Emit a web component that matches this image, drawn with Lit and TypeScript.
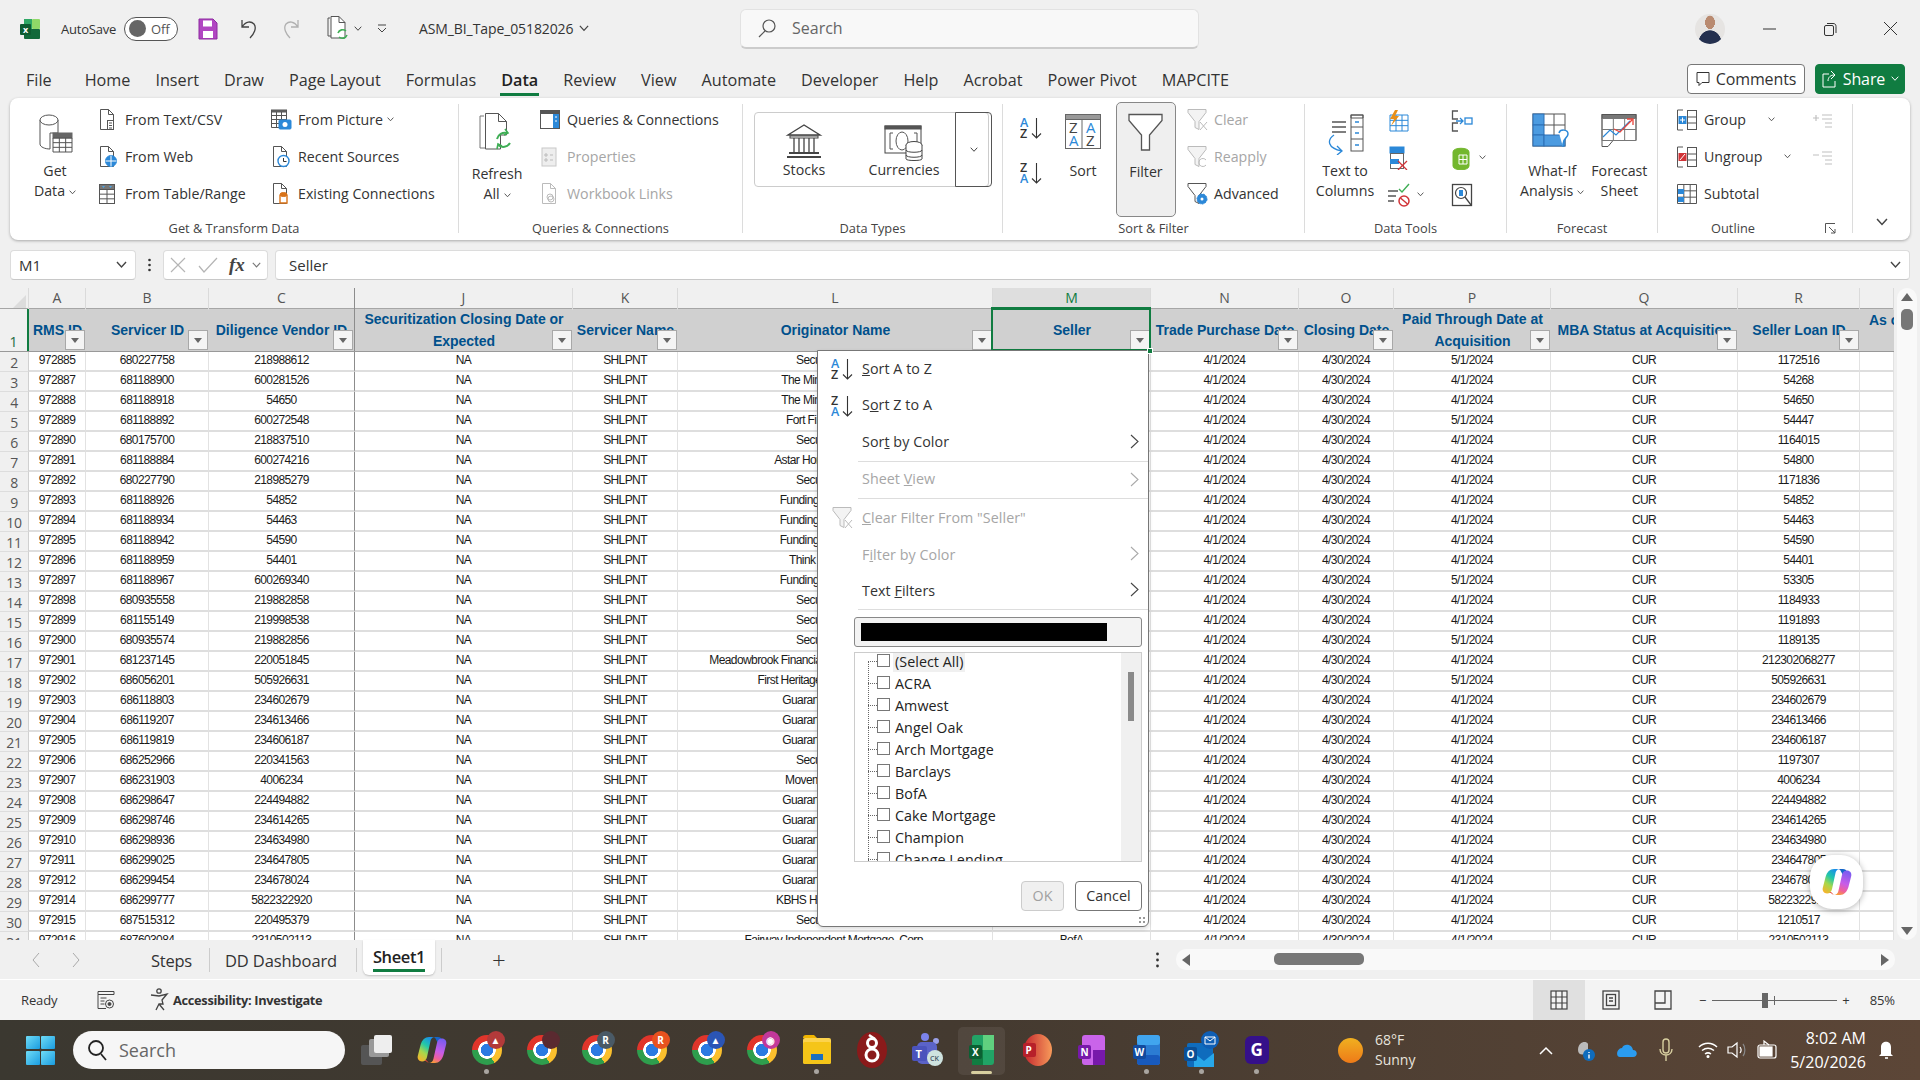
import { LitElement, html, css, svg } from "lit";
import { customElement } from "lit/decorators.js";

const ic = (w: number, h: number, body: any) => html`<svg class="ic" width=${w} height=${h} viewBox="0 0 ${w} ${h}" fill="none" stroke="#555" stroke-width="1">${body}</svg>`;
const docP = svg`<path d="M3.5 .5h8l5 5v15h-13z" fill="#fff"/><path d="M11.5 .5v5h5"/>`;
const gridS = (x: number, y: number, w: number, h: number, nx: number, ny: number, st = "#555") => {
  const o = [];
  for (let i = 0; i <= nx; i++) o.push(svg`<path d="M${x + (i * w) / nx} ${y}v${h}" stroke=${st}/>`);
  for (let i = 0; i <= ny; i++) o.push(svg`<path d="M${x} ${y + (i * h) / ny}h${w}" stroke=${st}/>`);
  return o;
};
const I: Record<string, any> = {
  getData: ic(38, 42, svg`<path d="M4 7v24c0 3 5 5 10 5V20h8V7" fill="#fff"/><ellipse cx="13" cy="7" rx="9" ry="5" fill="#fff"/><rect x="17" y="20" width="19" height="5" fill="#666" stroke="#666"/>${gridS(17, 25, 19, 14, 3, 3)}`),
  csv: ic(20, 22, svg`${docP}<rect x="10.5" y="11.5" width="6" height="9" fill="#fff"/><path d="M12 14h3M12 16.5h3M12 19h3"/>`),
  web: ic(20, 22, svg`${docP}<circle cx="14" cy="15" r="5.5" fill="#2b88d8" stroke="#2b88d8"/><path d="M8.5 15h11M14 9.500v11" stroke="#fff"/>`),
  range: ic(20, 22, svg`<rect x="2.500" y="1.500" width="15" height="19" fill="#fff"/><rect x="2.500" y="1.500" width="15" height="5" fill="#777"/><path d="M5 3l1.500 2L8 3zM12 3l1.500 2L15 3z" fill="#4aa5e8" stroke="none"/>${gridS(2.5, 6.5, 15, 14, 2, 3)}`),
  picture: ic(22, 22, svg`${gridS(1.5, 2.5, 15, 16, 3, 4)}<rect x="1.500" y="1" width="15" height="2" fill="#666"/><rect x="9" y="11" width="12" height="9" rx="1" fill="#2b88d8" stroke="#2b88d8"/><circle cx="15" cy="15.500" r="2.500" fill="#fff" stroke="none"/>`),
  recent: ic(20, 22, svg`${docP}<circle cx="13.500" cy="15" r="5.500" fill="#fff" stroke="#2b88d8" stroke-width="1.400"/><path d="M13.500 12v3.500h3" stroke="#333"/>`),
  existing: ic(20, 22, svg`${docP}<path d="M10 12v8h7v-8" fill="#fff" stroke="#d9741a" stroke-width="1.400"/><ellipse cx="13.500" cy="11.500" rx="3.500" ry="2" fill="#d9741a" stroke="#d9741a"/>`),
  queries: ic(22, 22, svg`<rect x="1.500" y="2.500" width="19" height="17" fill="#fff" stroke="#555"/><rect x="1.500" y="1.500" width="19" height="3" fill="#555"/><rect x="14" y="5" width="6" height="14" fill="#2b88d8" stroke="none"/><path d="M16 8h2M16 12h2" stroke="#fff"/>`),
  props: ic(20, 22, svg`<rect x="3" y="2" width="14" height="18" fill="#eee" stroke="#c8c8c8"/><path d="M6 8h2v2H6zM6 13h2v2H6zM11 9h3M11 14h3" stroke="#bbb"/>`),
  wlinks: ic(20, 22, svg`<g stroke="#bbb"><path d="M3.500 .5h8l5 5v15h-13z"/><path d="M11.500 .5v5h5"/><circle cx="11" cy="14" r="3"/><circle cx="12" cy="16" r="3"/></g>`),
  refresh: ic(40, 42, svg`<path d="M3 3h4M3 3v32h6" stroke="#777"/><path d="M8.500 .5h13l8 8V22h-6v14H8.500z" fill="#fff"/><path d="M21.500 .5v8h8"/><path d="M30 20a8 8 0 0 0-10 6m1 6a8 8 0 0 0 12-2" stroke="#3fae55" stroke-width="2"/><path d="M28 16l3 4-4 2M20 36l1-5 4 2" stroke="#3fae55" stroke-width="1.600"/>`),
  bank: ic(38, 36, svg`<path d="M19 2L3 12h32z" fill="#fff" stroke="#444" stroke-width="1.400"/><rect x="5" y="13" width="28" height="2" stroke="#444"/><path d="M9 15v14M14 15v14M19 15v14M24 15v14M29 15v14" stroke="#444" stroke-width="1.300"/><path d="M4 30h30M2 34h34" stroke="#444" stroke-width="1.800"/>`),
  curr: ic(42, 42, svg`<rect x="2" y="3" width="36" height="27" fill="#fff" stroke="#444"/><rect x="2" y="3" width="36" height="3" fill="#555"/><path d="M10 10H7v16h3M31 10h3v16h-3"/><ellipse cx="19" cy="18" rx="6" ry="9"/><ellipse cx="31" cy="22" rx="8" ry="3.500" fill="#fff" stroke="#444"/><path d="M23 22v14c0 2 16 2 16 0V22" fill="#fff" stroke="#444"/><path d="M23 27c0 3 16 3 16 0M23 32c0 3 16 3 16 0" stroke="#444"/>`),
  az: ic(24, 24, svg`<text x="0" y="10" class="st" fill="#2b88d8" stroke="none">A</text><text x="0" y="21" class="st" fill="#333" stroke="none">Z</text><path d="M16.500 1v20M12 16.500l4.500 4.500 4.500-4.500" stroke="#333" stroke-width="1.100"/>`),
  za: ic(24, 24, svg`<text x="0" y="10" class="st" fill="#333" stroke="none">Z</text><text x="0" y="21" class="st" fill="#2b88d8" stroke="none">A</text><path d="M16.500 1v20M12 16.500l4.500 4.500 4.500-4.500" stroke="#333" stroke-width="1.100"/>`),
  sort: ic(38, 38, svg`<rect x="1.500" y="1.500" width="35" height="34" fill="#fff" stroke="#666"/><rect x="1.500" y="1.500" width="35" height="5" fill="#999" stroke="#666"/><path d="M18 6v30" stroke="#666"/><text x="5" y="20" class="st2" fill="#444" stroke="none">Z</text><text x="5" y="33" class="st2" fill="#2b88d8" stroke="none">A</text><text x="22" y="20" class="st2" fill="#2b88d8" stroke="none">A</text><text x="22" y="33" class="st2" fill="#444" stroke="none">Z</text>`),
  filter: ic(38, 38, svg`<path d="M2 1.500h33v6L22.500 22v15h-8V22L2 7.500z" fill="#fff" stroke="#555" stroke-width="1.300"/>`),
  clear: ic(24, 24, svg`<path d="M2 1.500h18v3l-7 9v8l-4-2v-6l-7-9z" fill="#f3f3f3" stroke="#bbb"/><path d="M14 14l7 8M21 14l-7 8" stroke="#bbb"/>`),
  reapply: ic(24, 24, svg`<path d="M2 1.500h18v3l-7 9v8l-4-2v-6l-7-9z" fill="#f3f3f3" stroke="#bbb"/><path d="M20 15a4 4 0 1 0 0 5" stroke="#bbb"/>`),
  advanced: ic(24, 24, svg`<path d="M2 1.500h18v3l-7 9v8l-4-2v-6l-7-9z" fill="#fff" stroke="#555"/><circle cx="16" cy="17" r="5" fill="#2b88d8" stroke="#2b88d8" stroke-dasharray="2 1"/><circle cx="16" cy="17" r="1.500" fill="#fff" stroke="none"/>`),
  t2c: ic(42, 42, svg`<path d="M8 9h14M8 14h14M8 19h14" stroke="#555" stroke-width="1.500"/><rect x="27" y="2" width="12" height="36" fill="#fff" stroke="#555"/><path d="M27 2h12v3H27zM27 14h12M27 26h12"/><path d="M31 9h4M31 20h4M31 32h4" stroke="#2b88d8" stroke-width="1.500"/><path d="M10 22c-7 5-7 13 8 16M13 33l5 5-5 4" stroke="#2b88d8" stroke-width="1.300"/>`),
  flash: ic(22, 22, svg`${gridS(3, 5, 18, 16, 3, 3, "#2b88d8")}<path d="M8 0L3 9h4l-3 7 8-10H8l3-6z" fill="#e8901a" stroke="none"/>`),
  dup: ic(22, 24, svg`<rect x="3" y="1" width="14" height="6" fill="#2b88d8" stroke="#2b88d8"/><rect x="3.500" y="7.500" width="13" height="15" fill="#fff" stroke="#666"/><rect x="3" y="13" width="9" height="5" fill="#2b88d8" stroke="none"/><path d="M11 15l9 9M20 15l-9 9" stroke="#d13438" stroke-width="1.300"/>`),
  validate: ic(24, 24, svg`<path d="M1 8h10M1 13h8M1 18h6" stroke="#555" stroke-width="1.300"/><path d="M12 6l3 3 7-8" stroke="#3fae55" stroke-width="1.400"/><circle cx="17" cy="18" r="5" stroke="#d13438" stroke-width="1.500"/><path d="M13.500 15l7 6" stroke="#d13438" stroke-width="1.500"/>`),
  consol: ic(22, 22, svg`<path d="M7 1H1.500v8H7M7 13H1.500v8H7" stroke="#555" stroke-width="1.300"/><path d="M5 11h7M9 8l3 3-3 3" stroke="#2b88d8" stroke-width="1.300"/><rect x="14" y="8" width="7" height="6" stroke="#2b88d8" stroke-width="1.300"/>`),
  model: ic(22, 24, svg`<path d="M2 6c0-5 16-5 16 0v14c0 5-16 5-16 0z" fill="#73b72e" stroke="#73b72e"/><path d="M8 9h8v9H8zM12 9v9M8 13.500h8" stroke="#fff"/>`),
  dataan: ic(22, 24, svg`<rect x="1.500" y="1.500" width="19" height="21" stroke="#444" stroke-width="1.300"/><circle cx="10" cy="10" r="5.500" stroke="#444" stroke-width="1.200"/><path d="M14 14l6 8" stroke="#444" stroke-width="1.300"/><rect x="8" y="7" width="4" height="6" fill="#2b88d8" stroke="none"/>`),
  whatif: ic(40, 42, svg`<rect x="1" y="1" width="32" height="32" fill="#fff" stroke="#555"/><rect x="1" y="1" width="11" height="11" fill="#4c9be0" stroke="#2b6fb5"/><rect x="1" y="12" width="11" height="10" fill="#4c9be0" stroke="#2b6fb5"/><rect x="1" y="22" width="11" height="11" fill="#4c9be0" stroke="#2b6fb5"/><rect x="12" y="22" width="21" height="11" fill="#4c9be0" stroke="#2b6fb5"/><path d="M22 1v21M12 12h21M22 22" stroke="#555"/><path d="M27 20c1-4 9-4 9 1 0 4-5 4-5 10v3" fill="#fff" stroke="#2b88d8" stroke-width="1.500"/>`),
  forecast: ic(38, 36, svg`<path d="M2 1.500h34v26H13l-5 6H2z" fill="#fff"/><rect x="2" y="1.500" width="34" height="4" fill="#777"/>${gridS(2, 5.5, 34, 22, 3, 2, "#777")}<path d="M3 24l7-7 6 5 14-14" stroke="#2b88d8" stroke-width="1.200"/><path d="M14 16l6 3 12-12M27 6h6v6" stroke="#e8453c" stroke-width="1.300"/>`),
  group: ic(22, 22, svg`<path d="M7 1H1.500v20H7" stroke="#555"/><rect x="11.500" y="1.500" width="9" height="19" stroke="#555"/><path d="M11.500 8h9M11.500 14h9" stroke="#555"/><rect x="2.500" y="7" width="8" height="8" fill="#2b88d8" stroke="none"/><path d="M4 11h5M6.500 8.500v5" stroke="#fff"/>`),
  ungroup: ic(22, 22, svg`<path d="M7 1H1.500v20H7" stroke="#555"/><rect x="11.500" y="1.500" width="9" height="19" stroke="#555"/><path d="M11.500 8h9M11.500 14h9" stroke="#555"/><rect x="2.500" y="7" width="8" height="8" fill="#d13438" stroke="none"/><path d="M4 14l5-6" stroke="#fff"/>`),
  subtotal: ic(22, 22, svg`${gridS(1.5, 1.5, 19, 19, 3, 3)}<rect x="2" y="6" width="6" height="5" fill="#2b88d8" stroke="none"/><rect x="2" y="14" width="6" height="5" fill="#2b88d8" stroke="none"/>`),
  show: ic(22, 16, svg`<g stroke="#c0c0c0"><path d="M1 5h6M4 2v6M10 2h10M10 6h10M13 10h7M13 14h7" stroke-width="1.200"/></g>`),
  hide: ic(22, 16, svg`<g stroke="#c0c0c0"><path d="M1 5h6M10 2h10M10 6h10M13 10h7M13 14h7" stroke-width="1.200"/></g>`),
};
const chev = (w = 8, st = "#444") => html`<svg class="chev" width=${w} height=${w * 0.7} viewBox="0 0 8 5.600" fill="none" stroke=${st} stroke-width="1"><path d="M.7 .7L4 4.300 7.300 .7"/></svg>`;

const RAW = `972885|680227758|218988612|SecurityNational|5|1172516
972887|681188900|600281526|The Mint Mortgage Co|4|54268
972888|681188918|54650|The Mint Mortgage Co|4|54650
972889|681188892|600272548|Fort Financial Inc Co|5|54447
972890|680175700|218837510|SecurityNational|4|1164015
972891|681188884|600274216|Astar Home Lending LLC|4|54800
972892|680227790|218985279|SecurityNational|4|1171836
972893|681188926|54852|Funding Mortgage LLC|4|54852
972894|681188934|54463|Funding Mortgage LLC|4|54463
972895|681188942|54590|Funding Mortgage LLC|4|54590
972896|681188959|54401|Think Mortgage Inc|4|54401
972897|681188967|600269340|Funding Mortgage LLC|5|53305
972898|680935558|219882858|SecurityNational|4|1184933
972899|681155149|219998538|SecurityNational|4|1191893
972900|680935574|219882856|SecurityNational|5|1189135
972901|681237145|220051845|Meadowbrook Financial Mortgage Bankers Corp, Inc|4|212302068277
972902|686056201|505926631|First Heritage Mortgage, LLC Inc|5|505926631
972903|686118803|234602679|Guaranteed Rate, Inc.|4|234602679
972904|686119207|234613466|Guaranteed Rate, Inc.|4|234613466
972905|686119819|234606187|Guaranteed Rate, Inc.|4|234606187
972906|686252966|220341563|SecurityNational|4|1197307
972907|686231903|4006234|Movement Mortgage|4|4006234
972908|686298647|224494882|Guaranteed Rate, Inc.|4|224494882
972909|686298746|234614265|Guaranteed Rate, Inc.|4|234614265
972910|686298936|234634980|Guaranteed Rate, Inc.|4|234634980
972911|686299025|234647805|Guaranteed Rate, Inc.|4|234647805
972912|686299454|234678024|Guaranteed Rate, Inc.|4|234678024
972914|686299777|5822322920|KBHS Home Loans LLC|4|5822322920
972915|687515312|220495379|SecurityNational|4|1210517
972916|687603084|2310502113|Fairway Independent Mortgage, Corp.|4|2310502113`;
const ROWS = RAW.split("\n").map((l) => l.split("|"));
const COLS = ["A", "B", "C", "J", "K", "L", "M", "N", "O", "P", "Q", "R", ""];
const HEADS = ["RMS ID", "Servicer ID", "Diligence Vendor ID", "Securitization Closing Date or Expected", "Servicer Name", "Originator Name", "Seller", "Trade Purchase Date", "Closing Date", "Paid Through Date at Acquisition", "MBA Status at Acquisition", "Seller Loan ID"];
const TABS = ["File", "Home", "Insert", "Draw", "Page Layout", "Formulas", "Data", "Review", "View", "Automate", "Developer", "Help", "Acrobat", "Power Pivot", "MAPCITE"];
const SELLERS = ["ACRA", "Amwest", "Angel Oak", "Arch Mortgage", "Barclays", "BofA", "Cake Mortgage", "Champion", "Change Lending"];
const BADGES = [
  { c: "#b23a3a", t: "▲" },
  { c: "#5a2a30", t: "" },
  { c: "#4a5a66", t: "R" },
  { c: "#e8521f", t: "R" },
  { c: "#2b55b5", t: "▲" },
  { c: "#c2389a", t: "◉" },
];

@customElement("app-root")
export class AppRoot extends LitElement {
  static styles = css`
    :host { display: block; position: relative; width: 1920px; height: 1080px; overflow: hidden; background: #f0f0f0; font-family: "Open Sans", "Noto Sans", sans-serif; color: #333; font-size: 14px; }
    svg { display: block; flex: none; }
    .st { font: 600 12.500px "Open Sans", sans-serif; }
    .st2 { font: 400 15px "Open Sans", sans-serif; }
    .title { height: 57px; display: flex; align-items: center; padding-left: 20px; box-sizing: border-box; }
    .autosave { margin-left: 21px; width: 54px; font-size: 13px; letter-spacing: -.2px; }
    .toggle { margin-left: 9px; width: 54px; height: 24px; border: 1px solid #555; border-radius: 13px; box-sizing: border-box; display: flex; align-items: center; padding-left: 4px; background: #fff; font-size: 13px; gap: 5px; color: #555; }
    .toggle i { width: 17px; height: 17px; border-radius: 50%; background: #666; flex: none; }
    .qa { display: flex; align-items: center; margin-left: 20px; width: 221px; flex: none; }
    .fname { font-size: 14px; letter-spacing: -.1px; display: flex; align-items: center; gap: 6px; width: 321px; }
    .search { width: 459px; height: 40px; background: #f8f8f8; border: 1px solid #e2e2e2; border-bottom: 2px solid #ccc; border-radius: 6px; box-sizing: border-box; display: flex; align-items: center; padding-left: 16px; gap: 15px; color: #666; font-size: 16px; flex: none; }
    .win { margin-left: auto; display: flex; align-items: center; }
    .avatar { width: 30px; height: 30px; border-radius: 50%; background: radial-gradient(ellipse 5px 7px at 50% 28%, #b98a70 0 95%, transparent 100%), radial-gradient(ellipse 12px 14px at 50% 100%, #24304f 0 95%, transparent 100%), #e6e4e2; margin-right: 15px; }
    .winb { width: 60px; display: flex; justify-content: center; }
    .tabs { height: 41px; display: flex; align-items: flex-start; padding-left: 26px; font-size: 16.200px; box-sizing: border-box; }
    .tab { margin-right: 25px; height: 36px; line-height: 46px; box-sizing: content-box; position: relative; white-space: nowrap; }
    .tabs .first { margin-right: 33px; }
    .tab.on { font-weight: 600; color: #222; }
    .tab.on::after { content: ""; position: absolute; left: -1px; right: -1px; top: 36px; height: 3px; background: #107c41; }
    .tabs .right { margin-left: auto; display: flex; gap: 10px; padding: 7px 15px 0 0; }
    .cbtn { height: 30px; width: 118px; border: 1px solid #777; border-radius: 4px; background: #fff; display: flex; align-items: center; justify-content: center; gap: 6px; box-sizing: border-box; font-size: 16px; letter-spacing: -.1px; }
    .share { width: 90px; background: #107c41; border-color: #107c41; color: #fff; }
    .ribbon { margin: 0 10px; height: 142px; background: #fff; border-radius: 8px; box-shadow: 0 1px 3px rgba(0, 0, 0, .3); display: flex; font-size: 14.200px; flex: none; }
    .group { display: flex; flex-direction: column; flex: none; }
    .gbody { height: 114px; margin-top: 4px; display: flex; box-sizing: border-box; }
    .glabel { height: 24px; line-height: 25px; text-align: center; font-size: 12.800px; color: #444; }
    .sep { width: 1px; margin: 6px 0 7px; background: #dcdcdc; flex: none; }
    .lg { display: flex; flex-direction: column; align-items: center; flex: none; line-height: 20px; text-align: center; white-space: nowrap; }
    .lg .top { height: 59px; padding-top: 11px; box-sizing: border-box; display: flex; align-items: flex-start; justify-content: center; }
    .lg.tall .top { height: 62px; }
    .lg .chev { display: inline-block; margin-left: 4px; vertical-align: middle; }
    .col { display: flex; flex-direction: column; flex: none; margin-top: -1px; }
    .sm { height: 37px; display: flex; align-items: center; white-space: nowrap; }
    .sm .ib { width: 28px; flex: none; }
    .off { color: #a6a6a6; }
    .g1 { padding-left: 10px; }
    .w70 { width: 70px; }
    .ml7 { margin-left: 7px; }
    .c173 { width: 173px; }
    .dt { margin: 10px 0 0 11px; height: 75px; width: 235px; border: 1px solid #ccc; border-radius: 4px; display: flex; box-sizing: border-box; position: relative; }
    .dt .lg .top { height: 47px; padding-top: 10px; }
    .dtm { width: 35px; border: 1px solid #555; border-radius: 0 4px 4px 0; margin: -1px -1px -1px auto; display: flex; align-items: center; justify-content: center; flex: none; }
    .azc { width: 40px; margin-left: 9px; padding-top: 16px; gap: 21px; align-items: center; }
    .filterbtn { width: 60px; height: 115px; margin: 0 10px 0 2px; background: #efefef; border: 1px solid #888; border-radius: 5px; box-sizing: border-box; }
    .filterbtn .top { height: 59px; padding-top: 10px; }
    .colsm { display: flex; flex-direction: column; }
    .iconrow { height: 37px; display: flex; align-items: center; gap: 6px; }
    .outline-label { display: flex; height: 24px; align-items: center; }
    .collapse { flex: 1; display: flex; justify-content: center; align-items: flex-end; padding-bottom: 14px; }
    .fbar { height: 30px; margin: 10px 10px 8px; display: flex; align-items: stretch; flex: none; }
    .fbox { background: #fff; border: 1px solid #dcdcdc; border-bottom: 1px solid #c8c8c8; border-radius: 4px; box-sizing: border-box; display: flex; align-items: center; }
    .nbox { width: 126px; padding: 0 8px; justify-content: space-between; font-size: 15px; }
    .dots { width: 27px; display: flex; justify-content: center; align-items: center; }
    .fxb { width: 105px; padding: 0 6px 0 6px; gap: 7px; }
    .fx { font: italic 700 19px "Liberation Serif", serif; color: #444; }
    .finput { margin-left: 7px; flex: 1; padding: 0 8px 0 13px; justify-content: space-between; font-size: 15px; }
    .sheet { height: 652px; display: flex; flex: none; overflow: hidden; }
    .gridw { width: 1894px; height: 652px; overflow: hidden; background: #fff; flex: none; }
    .r { display: grid; grid-template-columns: 29px 57px 123px 146px 218px 105px 315px 158px 148px 95px 157px 187px 122px 34px; }
    .colh { height: 20px; background: #f0f0f0; color: #555; font-size: 14px; line-height: 20px; }
    .colh > div { text-align: center; border-right: 1px solid #dadada; box-sizing: border-box; }
    .colh .corner { position: relative; }
    .corner::after { content: ""; position: absolute; right: 2px; bottom: 2px; border-style: solid; border-width: 0 0 13px 13px; border-color: transparent transparent #dcdcdc transparent; }
    .colh .dk { border-right: 1px solid #8c8c8c; }
    .colh .sel { background: #dedede; color: #107c41; border-bottom: 2px solid #107c41; }
    .head { border-top: 1px solid #a6a6a6; border-bottom: 1px solid #999; height: 42px; background: #d0d0d0; }
    .head > div { position: relative; display: flex; align-items: center; justify-content: center; text-align: center; font: 700 14px/22px "Liberation Sans", sans-serif; color: #00508c; overflow: hidden; white-space: normal; padding: 0 2px; box-sizing: border-box; }
    .head .rn1 { background: #f0f0f0; border-right: 2px solid #107c41; color: #1d6b43; font: 400 14px "Open Sans", sans-serif; align-items: flex-end; }
    .head .dk { border-right: 1px solid #8c8c8c; }
    .head .nw { white-space: nowrap; }
    .head .nw span { flex: none; }
    .head .ls { justify-content: flex-start; align-items: flex-start; padding-left: 9px; }
    .fb { position: absolute; right: 1px; bottom: 1px; width: 20px; height: 20px; box-sizing: border-box; background: #f4f4f4; border: 1px solid #a8a8a8; display: flex; align-items: center; justify-content: center; }
    .fb::after { content: ""; border-style: solid; border-width: 5px 4px 0 4px; border-color: #666 transparent transparent transparent; }
    .row { height: 20px; }
    .row > div { border-right: 1px solid #e2e2e2; border-bottom: 2px solid #dedede; box-sizing: border-box; text-align: center; font: 400 12px/16px "Liberation Sans", sans-serif; letter-spacing: -.6px; color: #1a1a1a; white-space: nowrap; overflow: hidden; height: 20px; }
    .row .rn { background: #f0f0f0; font: 400 14px/21px "Open Sans", sans-serif; color: #555; border-right: 1px solid #d0d0d0; border-bottom: 1px solid #ddd; letter-spacing: -.3px; }
    .row .dk { border-right: 1px solid #8c8c8c; }
    .row .ct { display: flex; justify-content: center; }
    .row .ct span { flex: none; }
    .vs { width: 26px; height: 652px; flex: none; background: #f0f0f0; padding: 0 3px; box-sizing: border-box; }
    .vst { background: #f9f9f9; height: 100%; border-radius: 10px; display: flex; flex-direction: column; align-items: center; justify-content: space-between; padding: 5px 0; box-sizing: border-box; position: relative; }
    .vthumb { position: absolute; top: 21px; left: 4px; width: 12px; height: 21px; border-radius: 5px; background: #777; }
    .tri-u { border-style: solid; border-width: 0 6px 8px 6px; border-color: transparent transparent #666 transparent; }
    .tri-d { border-style: solid; border-width: 8px 6px 0 6px; border-color: #666 transparent transparent transparent; }
    .tri-l { border-style: solid; border-width: 6px 8px 6px 0; border-color: transparent #666 transparent transparent; }
    .tri-r { border-style: solid; border-width: 6px 0 6px 8px; border-color: transparent transparent transparent #666; }
    .stabs { height: 40px; flex: none; display: flex; align-items: flex-start; background: #f0f0f0; border-bottom: 1px solid #fff; box-sizing: border-box; }
    .navs { width: 151px; display: flex; padding: 12px 0 0 32px; gap: 32px; box-sizing: border-box; flex: none; }
    .st-t { font-size: 16.500px; letter-spacing: -.25px; height: 40px; display: flex; align-items: center; color: #333; white-space: nowrap; }
    .st-dd { width: 146px; justify-content: center; letter-spacing: -.1px; padding-right: 4px; box-sizing: border-box; }
    .tsep { width: 1px; height: 24px; background: #ccc; margin-top: 8px; flex: none; }
    .active { width: 72px; height: 35px; margin-left: 6px; background: #fff; border-radius: 0 0 6px 6px; box-shadow: 0 1px 2px rgba(0, 0, 0, .2); display: flex; flex-direction: column; align-items: center; font-weight: 600; font-size: 16.500px; letter-spacing: -.4px; color: #222; flex: none; position: relative; padding-top: 5px; box-sizing: border-box; }
    .active::after { content: ""; position: absolute; left: 10px; right: 10px; bottom: 3px; height: 3px; background: #107c41; }
    .plus { margin-left: 50px; margin-top: 9px; font-size: 24px; line-height: 22px; font-weight: 300; color: #333; }
    .hs { margin-left: auto; display: flex; align-items: flex-start; margin-right: 25px; }
    .hdots { margin: 12px 17px 0 0; }
    .hst { width: 719px; height: 21px; margin-top: 9px; background: #f9f9f9; border-radius: 10px; display: flex; align-items: center; padding: 0 6px; box-sizing: border-box; justify-content: space-between; position: relative; }
    .hthumb { position: absolute; left: 98px; top: 4px; width: 90px; height: 12px; background: #777; border-radius: 5px; }
    .status { height: 40px; background: #f3f3f3; display: flex; align-items: center; font-size: 13px; flex: none; padding-left: 21px; box-sizing: border-box; letter-spacing: -.1px; }
    .ready { width: 76px; }
    .acc { display: flex; align-items: center; gap: 3px; margin-left: 35px; font-weight: 700; font-size: 12.800px; letter-spacing: -.3px; }
    .views { margin-left: auto; display: flex; align-items: stretch; height: 40px; }
    .vb { width: 52px; display: flex; align-items: center; justify-content: center; }
    .vb.on { background: #e0e0e0; }
    .zoomc { display: flex; align-items: center; margin-left: 1px; width: 230px; font-size: 13px; }
    .ztrack { width: 125px; height: 1px; background: #666; position: relative; margin: 0 5px 0 6px; }
    .zthumb { position: absolute; left: 50px; top: -7px; width: 6px; height: 15px; background: #666; }
    .ztick { position: absolute; left: 62px; top: -4px; width: 1px; height: 9px; background: #666; }
    .taskbar { height: 60px; flex: none; background: linear-gradient(90deg, #3b3830 0%, #443a30 50%, #5c4637 100%); display: flex; align-items: center; position: relative; color: #fff; }
    .start { margin-left: 26px; width: 29px; height: 29px; display: grid; grid-template-columns: 1fr 1fr; gap: 1.500px; flex: none; }
    .start i { background: linear-gradient(135deg, #6fdcf7, #1a9ce0); border-radius: 1px; }
    .tsearch { margin-left: 18px; width: 272px; height: 38px; border-radius: 19px; background: #f6f6f6; display: flex; align-items: center; padding-left: 14px; gap: 12px; box-sizing: border-box; font-size: 18px; color: #666; flex: none; margin-right: 4px; }
    .cell { width: 55px; height: 60px; display: flex; align-items: center; justify-content: center; position: relative; flex: none; }
    .dot::after { content: ""; position: absolute; bottom: 6px; left: 25px; width: 5px; height: 5px; border-radius: 50%; background: #a9a5a0; }
    .xlcell::before { content: ""; position: absolute; left: 4px; top: 7px; width: 47px; height: 48px; border-radius: 5px; background: rgba(255, 255, 255, .07); }
    .xlcell::after { content: ""; position: absolute; left: 17px; right: 17px; bottom: 6px; height: 3px; border-radius: 2px; background: #d8cfa0; }
    .xlcell svg { position: relative; }
    .chrome { width: 30px; height: 30px; border-radius: 50%; background: radial-gradient(circle, #2a7ae2 0 6px, #fff 6.500px 8.500px, transparent 9px), conic-gradient(from 30deg, #fbc02d 0 120deg, #2e9e4d 120deg 240deg, #e0352b 240deg 360deg); position: relative; }
    .badge { position: absolute; right: -3px; top: -4px; width: 18px; height: 18px; border-radius: 50%; display: flex; align-items: center; justify-content: center; color: #fff; font: 700 10px "Open Sans", sans-serif; }
    .weather { margin-left: 54px; display: flex; align-items: center; gap: 12px; font-size: 14px; line-height: 20px; color: #e8e4de; flex: none; }
    .sun { width: 25px; height: 25px; border-radius: 50%; background: linear-gradient(#f0b020, #ee7a18); }
    .tray { margin-left: auto; display: flex; align-items: center; color: #fff; flex: none; }
    .traycell { width: 40px; display: flex; justify-content: center; }
    .traycell.mic { margin-right: 6px; }
    .clock { text-align: right; font-size: 16px; line-height: 24px; margin-left: 6px; white-space: nowrap; }
    .bell { margin: 0 24px 0 12px; }
    .dialog { position: absolute; left: 817px; top: 350px; width: 332px; height: 577px; background: #fff; border: 1px solid #777; border-radius: 0 0 6px 6px; box-sizing: border-box; display: flex; flex-direction: column; font-size: 14.300px; letter-spacing: .05px; color: #333; box-shadow: 0 2px 4px rgba(0, 0, 0, .15); }
    .mi { height: 36.500px; display: flex; align-items: center; padding-left: 44px; position: relative; flex: none; box-sizing: border-box; }
    .mi.up { padding-bottom: 2px; }
    .mi.dn { padding-top: 1px; }
    .mi .mic { position: absolute; left: 13px; top: 7px; }
    .mi .arr { position: absolute; right: 9px; top: 10px; }
    .msep { height: 1px; background: #ddd; margin-left: 40px; flex: none; }
    .gray { color: #a6a6a6; }
    .sbox { margin: 7px 6px 0 36px; height: 30px; border: 1px solid #888; border-radius: 3px; background: #f3f3f3; box-sizing: border-box; display: flex; align-items: center; padding-left: 6px; flex: none; }
    .redact { width: 246px; height: 18px; background: #000; }
    .lb { margin: 5px 6px 0 36px; height: 210px; border: 1px solid #ccc; box-sizing: border-box; display: flex; overflow: hidden; flex: none; }
    .lbl { flex: 1; padding: 0 0 0 13px; position: relative; overflow: hidden; }
    .lbl::before { content: ""; position: absolute; left: 13px; top: 9px; bottom: 0; border-left: 1px dotted #666; }
    .li { height: 22px; display: flex; align-items: center; position: relative; flex: none; }
    .li:first-child { margin-top: -2px; }
    .li::before { content: ""; width: 9px; border-top: 1px dotted #666; flex: none; }
    .cb { width: 13px; height: 13px; border: 1px solid #777; box-sizing: border-box; background: #fff; flex: none; margin-top: -3px; }
    .li span { margin-left: 3px; padding: 0 2px; line-height: 20px; color: #222; white-space: nowrap; }
    .li .hl { background: #f0f0f0; }
    .lbs { width: 20px; background: #f0f0f0; position: relative; flex: none; }
    .lbt { position: absolute; left: 7px; top: 19px; width: 6px; height: 49px; background: #8a8a8a; }
    .btns { display: flex; justify-content: flex-end; gap: 11px; margin: 19px 6px 0 0; }
    .btn { height: 30px; border: 1px solid #777; border-radius: 4px; box-sizing: border-box; display: flex; align-items: center; justify-content: center; background: #fff; width: 67px; }
    .btn.dis { width: 43px; background: #f0f0f0; border-color: #ccc; color: #a0a0a0; }
    .grip { position: absolute; right: 2px; bottom: 2px; width: 8px; height: 8px; background: radial-gradient(circle, #999 1px, transparent 1.300px) 0 0/4px 4px; }
    .handle { position: absolute; left: 1147px; top: 348px; width: 6px; height: 6px; background: #107c41; border: 1px solid #fff; box-sizing: border-box; }
    .outlineSel { position: absolute; left: 991px; top: 307px; width: 160px; height: 44px; border: 2px solid #107c41; box-sizing: border-box; pointer-events: none; }
    .copilot { position: absolute; left: 1810px; top: 855px; width: 53px; height: 54px; background: #fff; border-radius: 22px; box-shadow: 0 1px 6px rgba(0, 0, 0, .3); display: flex; align-items: center; justify-content: center; }
    .page { display: flex; flex-direction: column; height: 1080px; }
    .qa .m20 { margin-left: 22px; }
    .qa .m22 { margin-left: 20px; }
    .qa .m28 { margin-left: 26px; }
    .qa .m4 { margin-left: 4px; }
    .qa .m15 { margin-left: 15px; }
    .mchev { margin-left: 22px; }
    .fc { width: 58px; margin-left: 6px; }
    .tabw { width: 58px; }
    .cx { margin-left: 5px; }
    .fxm { margin-left: 4px; }
    .out { margin-left: 17px; }
    .zm { margin-left: 9px; }
    .zp { margin-left: 20px; }
    .tsepa { margin-left: 6px; }
    .g2 { padding-left: 3px; }
    .g5 { padding-left: 5px; }
    .g6 { padding-left: 13px; }
    .g7 { padding-left: 18px; }
    .w98 { width: 98px; }
    .w102 { width: 102px; }
    .w62 { width: 62px; }
    .w64 { width: 64px; }
    .w136 { width: 136px; }
    .w150 { width: 150px; }
    .t32 { width: 32px; }
    .t26 { width: 26px; }
    .t34 { width: 34px; }
    .ti { margin-left: 4px; }
    .ic-t { font: 700 10px "Open Sans", sans-serif; fill: #fff; }
    .ic-t17 { font: 700 17px "Open Sans", sans-serif; fill: #fff; }
    .ic-t11 { font: 700 11px "Open Sans", sans-serif; fill: #fff; }
    .ic-t7 { font: 600 7px "Open Sans", sans-serif; fill: #456; }
    .xl-t { font: 700 9px "Open Sans", sans-serif; fill: #fff; }
  `;

  sm(icon: any, label: string, off = false, extra: any = "") {
    return html`<div class="sm ${off ? "off" : ""}"><div class="ib">${icon}</div>${label}${extra}</div>`;
  }
  lg(icon: any, l1: string, l2: any, cls = "w70") {
    return html`<div class="lg ${cls}"><div class="top">${icon}</div><div>${l1}</div><div>${l2}</div></div>`;
  }
  copilotIcon(sz: number, id: string) {
    return html`<svg width=${sz} height=${sz * 0.93} viewBox="0 0 30 28"><defs>
      <linearGradient id="${id}a" x1=".7" y1="0" x2=".2" y2="1"><stop offset="0" stop-color="#1a8fe8"/><stop offset=".35" stop-color="#22c8a8"/><stop offset=".65" stop-color="#a8d84a"/><stop offset="1" stop-color="#f7b32b"/></linearGradient>
      <linearGradient id="${id}b" x1=".6" y1="0" x2=".3" y2="1"><stop offset="0" stop-color="#7a5cf0"/><stop offset=".5" stop-color="#c85ce8"/><stop offset=".8" stop-color="#f0609a"/><stop offset="1" stop-color="#f79a3a"/></linearGradient></defs>
      <path d="M16 1h5c2 0 3.500 1.200 4.300 3L27 9H22L19 3.500C18.500 2 17.500 1 16 1z" fill="#1565c8"/>
      <path d="M3 24h6l3 3h2c-2 0-4-.500-5-2z" fill="#e8473a"/>
      <path d="M12 1h5c-2 .500-3 2-3.500 4L10 21c-.700 3-2.500 4.500-5 4.500C2 25.500 0 23 .7 20L3.500 9C5 4 8 1 12 1z" fill="url(#${id}a)"/>
      <path d="M25 2.500c3 0 5 2.500 4.300 5.500l-2.800 11c-1.500 5-4.500 8-8.500 8h-6c2 0 3.800-1.500 4.400-4L20 7c.700-3 2.500-4.500 5-4.500z" fill="url(#${id}b)"/>
    </svg>`;
  }

  render() {
    return html`<div class="page">
      ${this.titleBar()}
      ${this.tabBar()}
      ${this.ribbon()}
      ${this.formula()}
      ${this.sheet()}
      ${this.sheetTabs()}
      ${this.statusBar()}
      ${this.taskbar()}
    </div>
    <div class="outlineSel"></div>
    ${this.dialog()}
    <div class="handle"></div>
    <div class="copilot">${this.copilotIcon(30, "cpa")}</div>`;
  }

  titleBar() {
    return html`<div class="title">
      <svg width="20" height="20" viewBox="0 0 20 20"><rect x="4" y="0" width="8" height="10" fill="#2fa866"/><rect x="12" y="0" width="8" height="10" rx="1" fill="#8fd968"/><rect x="4" y="10" width="16" height="10" rx="1" fill="#11693a"/><rect x="0" y="5" width="11" height="11" rx="1" fill="#0d5c31"/><text x="3" y="14" class="xl-t">x</text></svg>
      <div class="autosave">AutoSave</div>
      <div class="toggle"><i></i>Off</div>
      <div class="qa">
        <svg width="20" height="22" viewBox="0 0 20 22" fill="none"><path d="M1 1h14l4 4v16H1z" fill="#b146c2" stroke="#8e2aa0"/><rect x="5" y="2.500" width="9" height="6" fill="#fff"/><rect x="5" y="13" width="10" height="7" fill="#fff"/></svg>
        <svg class="m20" width="20" height="22" viewBox="0 0 20 22" fill="none" stroke="#444" stroke-width="1.300"><path d="M2 9c4-6 9-6 12-3 3 4 0 10-4 14M2 2v7h7"/></svg>
        <svg class="m22" width="20" height="22" viewBox="0 0 20 22" fill="none" stroke="#b0b0b0" stroke-width="1.300"><path d="M18 9c-4-6-9-6-12-3-3 4 0 10 4 14M18 2v7h-7"/></svg>
        <svg class="m28" width="24" height="26" viewBox="0 0 24 26" fill="none" stroke="#555"><path d="M2 2h2M2 2v18h3"/><path d="M5 .5h8l6 6V22H5z" fill="#fff"/><path d="M13 .5v6h6"/><path d="M20 15a5 5 0 0 0-8 2m1 4a5 5 0 0 0 8-2" stroke="#3fae55" stroke-width="1.600"/></svg>
        <span class="m4">${chev(8)}</span>
        <svg class="m15" width="10" height="10" viewBox="0 0 10 10" fill="none" stroke="#444"><path d="M1 1h8M1 4l4 4 4-4"/></svg>
      </div>
      <div class="fname">ASM_BI_Tape_05182026 ${chev(10)}</div>
      <div class="search"><svg width="20" height="20" viewBox="0 0 20 20" fill="none" stroke="#555" stroke-width="1.200"><circle cx="12" cy="8" r="6"/><path d="M8 13l-6 6"/></svg>Search</div>
      <div class="win">
        <div class="avatar"></div>
        <div class="winb"><svg width="14" height="2"><path d="M0 1h13" stroke="#333"/></svg></div>
        <div class="winb"><svg width="14" height="14" viewBox="0 0 14 14" fill="none" stroke="#333"><rect x="1.500" y="3.500" width="9" height="10" rx="1.500"/><path d="M4 1.500h6c2 0 3 1 3 3V11"/></svg></div>
        <div class="winb"><svg width="15" height="15" viewBox="0 0 15 15" fill="none" stroke="#333"><path d="M1 1l13 13M14 1L1 14"/></svg></div>
      </div>
    </div>`;
  }

  tabBar() {
    return html`<div class="tabs">
      ${TABS.map((t, i) => html`<div class="tab ${i === 0 ? "first" : ""} ${t === "Data" ? "on" : ""}">${t}</div>`)}
      <div class="right">
        <div class="cbtn"><svg width="14" height="16" viewBox="0 0 14 16" fill="none" stroke="#333"><path d="M1 1.500h12v10H6l-3 3v-3H1z"/></svg>Comments</div>
        <div class="cbtn share"><svg width="16" height="18" viewBox="0 0 16 18" fill="none" stroke="#fff"><path d="M8 4H2v13h12v-6M7 11c0-4 3-6 6-6M10 1l4 4-4 4"/></svg>Share ${chev(8, "#fff")}</div>
      </div>
    </div>`;
  }

  ribbon() {
    return html`<div class="ribbon">
      <div class="group" style="width:448px">
        <div class="gbody g1">
          ${this.lg(I.getData, "Get", html`Data${chev(7)}`)}
          <div class="col c173 ml7">${this.sm(I.csv, "From Text/CSV")}${this.sm(I.web, "From Web")}${this.sm(I.range, "From Table/Range")}</div>
          <div class="col">${this.sm(I.picture, "From Picture", false, html`<span class="ti">${chev(7)}</span>`)}${this.sm(I.recent, "Recent Sources")}${this.sm(I.existing, "Existing Connections")}</div>
        </div>
        <div class="glabel">Get &amp; Transform Data</div>
      </div><div class="sep"></div>
      <div class="group" style="width:283px">
        <div class="gbody g2">
          ${this.lg(I.refresh, "Refresh", html`All${chev(7)}`, "w70 tall")}
          <div class="col ml7">${this.sm(I.queries, "Queries & Connections")}${this.sm(I.props, "Properties", true)}${this.sm(I.wlinks, "Workbook Links", true)}</div>
        </div>
        <div class="glabel">Queries &amp; Connections</div>
      </div><div class="sep"></div>
      <div class="group" style="width:259px">
        <div class="gbody">
          <div class="dt">
            <div class="lg w98"><div class="top">${I.bank}</div><div>Stocks</div></div>
            <div class="lg w102"><div class="top">${I.curr}</div><div>Currencies</div></div>
            <div class="dtm">${chev(8)}</div>
          </div>
        </div>
        <div class="glabel">Data Types</div>
      </div><div class="sep"></div>
      <div class="group" style="width:301px">
        <div class="gbody">
          <div class="col azc">${I.az}${I.za}</div>
          <div class="lg w62"><div class="top">${I.sort}</div><div>Sort</div></div>
          <div class="lg filterbtn"><div class="top">${I.filter}</div><div>Filter</div></div>
          <div class="col">${this.sm(I.clear, "Clear", true)}${this.sm(I.reapply, "Reapply", true)}${this.sm(I.advanced, "Advanced")}</div>
        </div>
        <div class="glabel">Sort &amp; Filter</div>
      </div><div class="sep"></div>
      <div class="group" style="width:201px">
        <div class="gbody g5">
          ${this.lg(I.t2c, "Text to", "Columns")}
          <div class="colsm ml7 w64">
            <div class="iconrow">${I.flash}</div><div class="iconrow">${I.dup}</div><div class="iconrow">${I.validate}${chev(7)}</div>
          </div>
          <div class="colsm">
            <div class="iconrow">${I.consol}</div><div class="iconrow">${I.model}${chev(7)}</div><div class="iconrow">${I.dataan}</div>
          </div>
        </div>
        <div class="glabel">Data Tools</div>
      </div><div class="sep"></div>
      <div class="group" style="width:150px">
        <div class="gbody g6">
          ${this.lg(I.whatif, "What-If", html`Analysis${chev(7)}`, "")}
          <div class="lg fc"><div class="top">${I.forecast}</div><div>Forecast</div><div>Sheet</div></div>
        </div>
        <div class="glabel">Forecast</div>
      </div><div class="sep"></div>
      <div class="group" style="width:194px">
        <div class="gbody g7">
          <div class="col w136">
            ${this.sm(I.group, "Group", false, html`<span class="mchev">${chev(7)}</span>`)}
            ${this.sm(I.ungroup, "Ungroup", false, html`<span class="mchev">${chev(7)}</span>`)}
            ${this.sm(I.subtotal, "Subtotal")}
          </div>
          <div class="colsm"><div class="iconrow">${I.show}</div><div class="iconrow">${I.hide}</div></div>
        </div>
        <div class="outline-label"><div class="glabel w150">Outline</div>
          <svg class="out" width="11" height="11" viewBox="0 0 11 11" fill="none" stroke="#555"><path d="M.5 10V.5H10M4 4l6 6M10 6v4H6"/></svg></div>
      </div><div class="sep"></div>
      <div class="collapse">${chev(12, "#444")}</div>
    </div>`;
  }

  formula() {
    return html`<div class="fbar">
      <div class="fbox nbox">M1 ${chev(11)}</div>
      <div class="dots"><svg width="3" height="14"><circle cx="1.500" cy="2" r="1.300" fill="#333"/><circle cx="1.500" cy="7" r="1.300" fill="#333"/><circle cx="1.500" cy="12" r="1.300" fill="#333"/></svg></div>
      <div class="fbox fxb">
        <svg width="16" height="16" viewBox="0 0 16 16" fill="none" stroke="#b5b5b5" stroke-width="1.200"><path d="M1 1l14 14M15 1L1 15"/></svg>
        <svg class="cx" width="20" height="16" viewBox="0 0 20 16" fill="none" stroke="#b5b5b5" stroke-width="1.200"><path d="M1 9l5 6L19 1"/></svg>
        <span class="fx fxm">fx</span>${chev(9, "#777")}
      </div>
      <div class="fbox finput">Seller ${chev(11)}</div>
    </div>`;
  }

  sheet() {
    const dk = (i: number) => (i === 2 ? "dk" : "");
    return html`<div class="sheet">
      <div class="gridw">
        <div class="r colh">
          <div class="corner"></div>
          ${COLS.map((c, i) => html`<div class="${dk(i)} ${c === "M" ? "sel" : ""}">${c}</div>`)}
        </div>
        <div class="r head">
          <div class="rn1">1</div>
          ${HEADS.map((h, i) => html`<div class="${dk(i)} ${h.length < 27 ? "nw" : ""}"><span>${h}</span><i class="fb"></i></div>`)}
          <div class="nw ls"><span>As of Date</span></div>
        </div>
        ${ROWS.map((r, i) => html`<div class="r row">
          <div class="rn">${i + 2}</div>
          <div>${r[0]}</div><div>${r[1]}</div><div class="dk">${r[2]}</div>
          <div>NA</div><div>SHLPNT</div><div class="ct"><span>${r[3]}</span></div><div>${i === 29 ? "BofA" : ""}</div>
          <div>4/1/2024</div><div>4/30/2024</div><div>${r[4]}/1/2024</div><div>CUR</div><div>${r[5]}</div><div></div>
        </div>`)}
      </div>
      <div class="vs"><div class="vst"><div class="tri-u"></div><div class="vthumb"></div><div class="tri-d"></div></div></div>
    </div>`;
  }

  sheetTabs() {
    return html`<div class="stabs">
      <div class="navs">
        <svg width="8" height="16" viewBox="0 0 8 16" fill="none" stroke="#aaa"><path d="M7 1L1 8l6 7"/></svg>
        <svg width="8" height="16" viewBox="0 0 8 16" fill="none" stroke="#aaa"><path d="M1 1l6 7-6 7"/></svg>
      </div>
      <div class="st-t tabw">Steps</div><div class="tsep"></div>
      <div class="st-t st-dd">DD Dashboard</div><div class="tsep"></div>
      <div class="active">Sheet1</div>
      <div class="tsep tsepa"></div>
      <div class="plus">+</div>
      <div class="hs">
        <svg class="hdots" width="3" height="16"><circle cx="1.500" cy="2" r="1.400" fill="#333"/><circle cx="1.500" cy="8" r="1.400" fill="#333"/><circle cx="1.500" cy="14" r="1.400" fill="#333"/></svg>
        <div class="hst"><div class="tri-l"></div><div class="hthumb"></div><div class="tri-r"></div></div>
      </div>
    </div>`;
  }

  statusBar() {
    return html`<div class="status">
      <div class="ready">Ready</div>
      <svg width="18" height="20" viewBox="0 0 18 20" fill="none" stroke="#444"><path d="M1 1.500h16v3H1zM1 4.500v14h8M3.500 8h6M3.500 11h4M3.500 14h4"/><circle cx="12.500" cy="14" r="4"/><circle cx="12.500" cy="14" r="1.500" fill="#444"/></svg>
      <div class="acc"><svg width="20" height="24" viewBox="0 0 20 24" fill="none" stroke="#444" stroke-width="1.300"><circle cx="9" cy="3" r="2.200"/><path d="M1 7l8 1 8-2-5 6 1 4-4 0 -3 6M9 16l5 6"/></svg>Accessibility: Investigate</div>
      <div class="views">
        <div class="vb on"><svg width="18" height="20" viewBox="0 0 18 20" fill="none" stroke="#444" stroke-width="1.200"><rect x="1" y="1" width="16" height="18" fill="#f3f3f3"/><path d="M6 1v18M12 1v18M1 7h16M1 13h16"/></svg></div>
        <div class="vb"><svg width="18" height="20" viewBox="0 0 18 20" fill="none" stroke="#444" stroke-width="1.300"><rect x="1" y="1" width="16" height="18"/><rect x="4.500" y="4.500" width="9" height="11"/><path d="M7 8h4M7 11h4"/></svg></div>
        <div class="vb"><svg width="18" height="20" viewBox="0 0 18 20" fill="none" stroke="#444" stroke-width="1.300"><path d="M1 1h16v18H1zM1 13h10V1"/></svg></div>
      </div>
      <div class="zoomc">
        <span class="zm">−</span>
        <div class="ztrack"><div class="zthumb"></div><div class="ztick"></div></div>
        <span>+</span>
        <span class="zp">85%</span>
      </div>
    </div>`;
  }

  taskbar() {
    return html`<div class="taskbar">
      <div class="start"><i></i><i></i><i></i><i></i></div>
      <div class="tsearch"><svg width="20" height="22" viewBox="0 0 20 22" fill="none" stroke="#222" stroke-width="1.800"><circle cx="9" cy="9" r="7"/><path d="M14 15l5 6"/></svg>Search</div>
      <div class="cell"><svg width="32" height="30" viewBox="0 0 32 30"><rect x="0" y="10" width="21" height="20" rx="2" fill="#555"/><rect x="8" y="4" width="20" height="18" rx="2" fill="#999"/><rect x="13" y="0" width="18" height="18" rx="2" fill="#eee"/></svg></div>
      <div class="cell">${this.copilotIcon(30, "cpb")}</div>
      ${BADGES.map((b, i) => html`<div class="cell ${i === 0 ? "dot" : ""}"><div class="chrome"><div class="badge" style="background:${b.c}">${b.t}</div></div></div>`)}
      <div class="cell dot"><svg width="30" height="32" viewBox="0 0 30 32"><path d="M1 4c0-2 1-3 3-3h8l3 3H1z" fill="#f0b400"/><rect x="1" y="4" width="28" height="26" rx="2" fill="#fcd34d"/><rect x="1" y="8" width="28" height="22" rx="2" fill="#f5c518"/><rect x="9" y="20" width="12" height="6" fill="#1a6fc0"/></svg></div>
      <div class="cell"><svg width="30" height="36" viewBox="0 0 30 36"><ellipse cx="15" cy="18" rx="15" ry="18" fill="#8a1a1a"/><circle cx="15" cy="23" r="6" fill="none" stroke="#fff" stroke-width="3"/><circle cx="15" cy="11" r="4.500" fill="none" stroke="#fff" stroke-width="3"/><path d="M12 3l6 4" stroke="#fff" stroke-width="2.500"/></svg></div>
      <div class="cell"><svg width="32" height="36" viewBox="0 0 32 36"><circle cx="14" cy="5" r="4" fill="#7b83eb"/><circle cx="25" cy="9" r="3" fill="#9aa0e8"/><rect x="6" y="10" width="20" height="22" rx="5" fill="#5b63c8"/><rect x="1" y="14" width="15" height="15" rx="2" fill="#4b53bc"/><circle cx="24" cy="26" r="8" fill="#cfe3df"/><text x="4.500" y="26" class="ic-t11">T</text><text x="19" y="29" class="ic-t7">CK</text></svg></div>
      <div class="cell xlcell"><svg width="26" height="32" viewBox="0 0 26 32"><rect x="3" y="1" width="22" height="30" rx="3" fill="#21a366"/><rect x="14" y="1" width="11" height="15" fill="#60d07f"/><rect x="3" y="16" width="11" height="15" fill="#107c41"/><rect x="0" y="11" width="13" height="14" rx="2" fill="#0b5f33"/><text x="3" y="22" class="ic-t">X</text></svg></div>
      <div class="cell"><svg width="30" height="32" viewBox="0 0 30 32"><defs><linearGradient id="pp" x1="0" x2="1"><stop offset="0" stop-color="#c4262e"/><stop offset="1" stop-color="#f79a5a"/></linearGradient></defs><ellipse cx="16" cy="16" rx="14" ry="16" fill="url(#pp)"/><rect x="1" y="9" width="13" height="14" rx="2" fill="#b7202a"/><text x="3.500" y="20" class="ic-t">P</text></svg></div>
      <div class="cell"><svg width="28" height="32" viewBox="0 0 28 32"><rect x="4" y="1" width="23" height="30" rx="3" fill="#ca64ea"/><rect x="15" y="16" width="12" height="15" fill="#7719aa"/><rect x="0" y="11" width="13" height="14" rx="2" fill="#7719aa"/><text x="2.500" y="22" class="ic-t">N</text></svg></div>
      <div class="cell dot"><svg width="28" height="32" viewBox="0 0 28 32"><rect x="4" y="1" width="23" height="30" rx="3" fill="#2b7cd3"/><rect x="4" y="1" width="23" height="10" rx="3" fill="#41a5ee"/><rect x="4" y="21" width="23" height="10" rx="3" fill="#185abd"/><rect x="0" y="11" width="13" height="14" rx="2" fill="#124a9e"/><text x="1.500" y="22" class="ic-t">W</text></svg></div>
      <div class="cell dot"><svg width="36" height="38" viewBox="0 0 36 38"><rect x="3" y="12" width="26" height="24" rx="2" fill="#0f6cbd"/><path d="M10 22l10 8 10-8v14H10z" fill="#28a8ea"/><rect x="0" y="16" width="13" height="14" rx="2" fill="#0a4f96"/><text x="2.500" y="27" class="ic-t">O</text><circle cx="26" cy="9" r="9" fill="#0f5fb5"/><path d="M21 6h10v7H21zM21 6l5 4 5-4" fill="none" stroke="#fff"/></svg></div>
      <div class="cell dot"><svg width="26" height="30" viewBox="0 0 26 30"><rect x="1" y="1" width="24" height="28" rx="6" fill="#35108a"/><text x="6.500" y="21" class="ic-t17">G</text></svg></div>
      <div class="weather"><div class="sun"></div><div>68°F<br />Sunny</div></div>
      <div class="tray">
        <div class="traycell"><svg width="14" height="9" viewBox="0 0 14 9" fill="none" stroke="#fff" stroke-width="1.500"><path d="M1 8l6-6 6 6"/></svg></div>
        <div class="traycell"><svg width="22" height="24" viewBox="0 0 22 24"><path d="M3 12c0-8 8-10 10-6v8c-3 3-10 4-10-2z" fill="#bbb"/><circle cx="14" cy="17" r="6" fill="#0f6cbd"/><path d="M14 14v1M14 16.500v4" stroke="#fff" stroke-width="1.400"/></svg></div>
        <div class="traycell"><svg width="22" height="16" viewBox="0 0 22 16"><path d="M5 15h13c5 0 5-7 0-7C17 2 9 1 7 6c-5 0-7 9-2 9z" fill="#2b9cf0"/></svg></div>
        <div class="traycell mic"><svg width="14" height="24" viewBox="0 0 14 24" fill="none" stroke="#d8cfa0" stroke-width="1.400"><rect x="4" y="1" width="6" height="14" rx="3"/><path d="M1 11c0 8 12 8 12 0M7 17v6"/></svg></div>
        <div class="traycell t32"><svg width="20" height="16" viewBox="0 0 20 16" fill="none" stroke="#fff" stroke-width="1.500"><path d="M1 5c5-5 13-5 18 0M4 8.500c4-3 8-3 12 0M7 12c2-1.500 4-1.500 6 0"/><circle cx="10" cy="14.500" r=".8" fill="#fff"/></svg></div>
        <div class="traycell t26"><svg width="20" height="18" viewBox="0 0 20 18" fill="none" stroke="#fff" stroke-width="1.200"><path d="M1 6h4l5-4v14l-5-4H1zM13 6c1.500 2 1.500 4 0 6"/><path d="M16 3c2.500 3 2.500 9 0 12" stroke="#888"/></svg></div>
        <div class="traycell t34"><svg width="22" height="20" viewBox="0 0 22 20" fill="none" stroke="#fff" stroke-width="1.200"><rect x="2" y="5" width="18" height="13" rx="2"/><rect x="4" y="7" width="12" height="9" fill="#fff"/><path d="M8 5V1l5 4"/></svg></div>
        <div class="clock">8:02 AM<br />5/20/2026</div>
        <div class="bell"><svg width="18" height="22" viewBox="0 0 18 22" fill="#fff"><path d="M3 15V8c0-7 10-7 10 0v7l2 2H1z"/><path d="M7 19h3" stroke="#fff" stroke-width="1.600"/></svg></div>
      </div>
    </div>`;
  }

  dialog() {
    const arr = (st = "#444") => html`<svg class="arr" width="9" height="15" viewBox="0 0 9 15" fill="none" stroke=${st} stroke-width="1.100"><path d="M1 1l7 6.500L1 14"/></svg>`;
    return html`<div class="dialog">
      <div class="mi up"><span class="mic">${I.az}</span><span><u>S</u>ort A to Z</span></div>
      <div class="mi up"><span class="mic">${I.za}</span><span>S<u>o</u>rt Z to A</span></div>
      <div class="mi up"><span>Sor<u>t</u> by Color</span>${arr()}</div>
      <div class="msep"></div>
      <div class="mi up gray"><span>Sheet <u>V</u>iew</span>${arr("#aaa")}</div>
      <div class="msep"></div>
      <div class="mi dn gray"><span class="mic">${I.clear}</span><span><u>C</u>lear Filter From "Seller"</span></div>
      <div class="mi dn gray"><span>F<u>i</u>lter by Color</span>${arr("#aaa")}</div>
      <div class="mi"><span>Text <u>F</u>ilters</span>${arr()}</div>
      <div class="msep"></div>
      <div class="sbox"><div class="redact"></div></div>
      <div class="lb">
        <div class="lbl">
          <div class="li"><div class="cb"></div><span class="hl">(Select All)</span></div>
          ${SELLERS.map((s) => html`<div class="li"><div class="cb"></div><span>${s}</span></div>`)}
        </div>
        <div class="lbs"><div class="lbt"></div></div>
      </div>
      <div class="btns"><div class="btn dis">OK</div><div class="btn">Cancel</div></div>
      <div class="grip"></div>
    </div>`;
  }
}
